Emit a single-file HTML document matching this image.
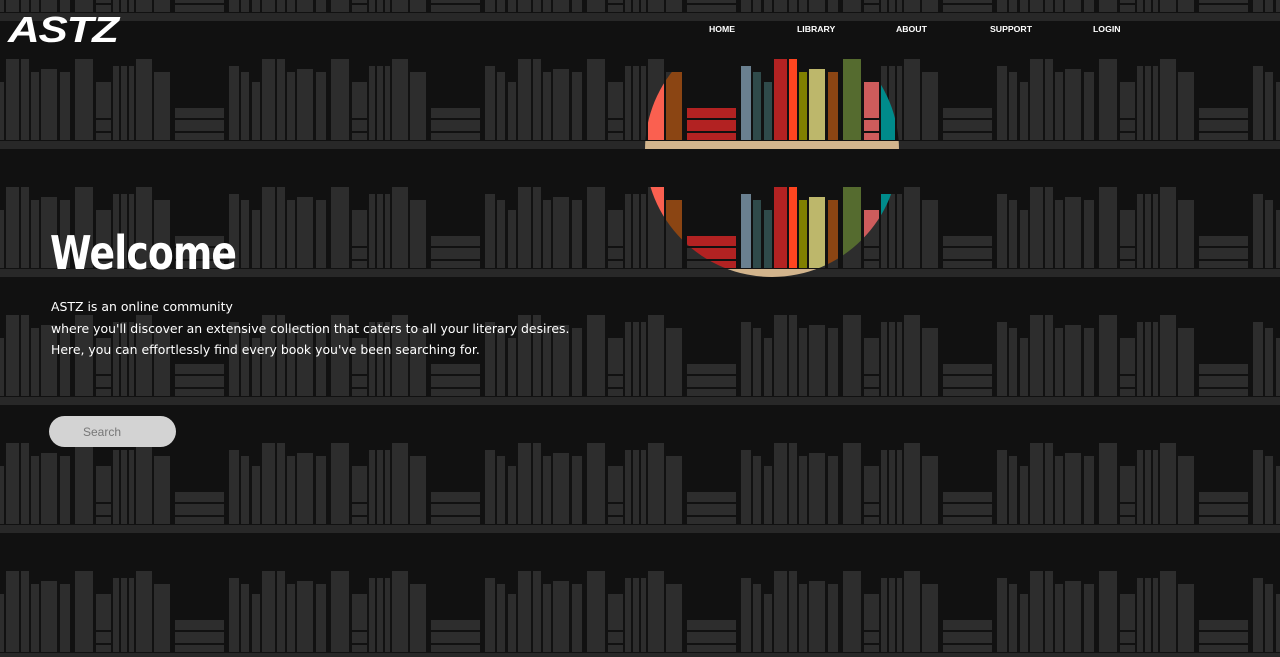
<!DOCTYPE html>
<html><head><meta charset="utf-8"><style>
html,body{margin:0;padding:0;width:1280px;height:657px;overflow:hidden;background:#111;}
svg.bg{position:absolute;left:0;top:0;}
.logo{position:absolute;left:8px;top:9px;font:italic bold 36px "Liberation Sans",sans-serif;color:#fff;letter-spacing:-1px;transform:scaleX(1.22);transform-origin:left;}
.nav a{position:absolute;top:24px;font:bold 8.7px "Liberation Sans",sans-serif;color:#fff;text-decoration:none;}
h1{position:absolute;left:50px;top:226px;margin:0;font:bold 46px "DejaVu Sans",sans-serif;color:#fff;letter-spacing:-1px;transform:scaleX(0.82);transform-origin:left;}
p{position:absolute;left:51px;top:296px;margin:0;font:12.45px/21.5px "DejaVu Sans",sans-serif;color:#fff;}
.search{position:absolute;left:49px;top:416px;width:127px;height:31px;border-radius:16px;background:#d3d3d3;}
.search span{position:absolute;left:34px;top:9px;font:12px "Liberation Sans",sans-serif;color:#777;}
</style></head><body>
<svg class="bg" width="1280" height="657">
<defs>
<pattern id="g" x="0" y="13" width="256" height="128" patternUnits="userSpaceOnUse">
<rect width="256" height="128" fill="#111"/>
<rect y="0" width="256" height="8" fill="#282828"/>
<g fill="#2d2d2d">
<rect x="0" y="69" width="4" height="58"/>
<rect x="6" y="46" width="13" height="81"/>
<rect x="21" y="46" width="8" height="81"/>
<rect x="31" y="59" width="8" height="68"/>
<rect x="41" y="56" width="16" height="71"/>
<rect x="60" y="59" width="10" height="68"/>
<rect x="75" y="46" width="18" height="81"/>
<rect x="96" y="69" width="15" height="36"/>
<rect x="96" y="107" width="15" height="11"/>
<rect x="96" y="120" width="15" height="7"/>
<rect x="113" y="53" width="6" height="74"/>
<rect x="121" y="53" width="6" height="74"/>
<rect x="129" y="53" width="5" height="74"/>
<rect x="136" y="46" width="16" height="81"/>
<rect x="154" y="59" width="16" height="68"/>
<rect x="175" y="95" width="49" height="10"/>
<rect x="175" y="107" width="49" height="11"/>
<rect x="175" y="120" width="49" height="7"/>
<rect x="229" y="53" width="10" height="74"/>
<rect x="241" y="59" width="8" height="68"/>
<rect x="252" y="69" width="4" height="58"/>
</g>
</pattern>
<pattern id="c" x="0" y="13" width="256" height="128" patternUnits="userSpaceOnUse">
<rect width="256" height="128" fill="#111"/>
<rect y="0" width="256" height="8" fill="#d2b48c"/>
<rect x="0" y="69" width="4" height="58" fill="#2f4a4a"/>
<rect x="6" y="46" width="13" height="81" fill="#b22222"/>
<rect x="21" y="46" width="8" height="81" fill="#ff4520"/>
<rect x="31" y="59" width="8" height="68" fill="#808000"/>
<rect x="41" y="56" width="16" height="71" fill="#bdb76b"/>
<rect x="60" y="59" width="10" height="68" fill="#8b4513"/>
<rect x="75" y="46" width="18" height="81" fill="#556b2f"/>
<rect x="96" y="69" width="15" height="36" fill="#cd5c5c"/>
<rect x="96" y="107" width="15" height="11" fill="#cd5c5c"/>
<rect x="96" y="120" width="15" height="7" fill="#cd5c5c"/>
<rect x="113" y="53" width="14" height="74" fill="#008b8b"/>
<rect x="136" y="46" width="16" height="81" fill="#fa6050"/>
<rect x="154" y="59" width="16" height="68" fill="#8b4513"/>
<rect x="175" y="95" width="49" height="10" fill="#b22222"/>
<rect x="175" y="107" width="49" height="11" fill="#b22222"/>
<rect x="175" y="120" width="49" height="7" fill="#b22222"/>
<rect x="229" y="53" width="10" height="74" fill="#6a8090"/>
<rect x="241" y="59" width="8" height="68" fill="#2f4a4a"/>
<rect x="252" y="69" width="4" height="58" fill="#2f4a4a"/>
</pattern>
<clipPath id="cc"><circle cx="772" cy="150" r="127"/></clipPath>
</defs>
<rect width="1280" height="657" fill="url(#g)"/>
<rect width="1280" height="657" fill="url(#c)" clip-path="url(#cc)"/>
</svg>
<div class="logo">ASTZ</div>
<div class="nav">
<a style="left:709px">HOME</a>
<a style="left:797px">LIBRARY</a>
<a style="left:896px">ABOUT</a>
<a style="left:990px">SUPPORT</a>
<a style="left:1093px">LOGIN</a>
</div>
<h1>Welcome</h1>
<p>ASTZ is an online community<br>where you'll discover an extensive collection that caters to all your literary desires.<br>Here, you can effortlessly find every book you've been searching for.</p>
<div class="search"><span>Search</span></div>
</body></html>
